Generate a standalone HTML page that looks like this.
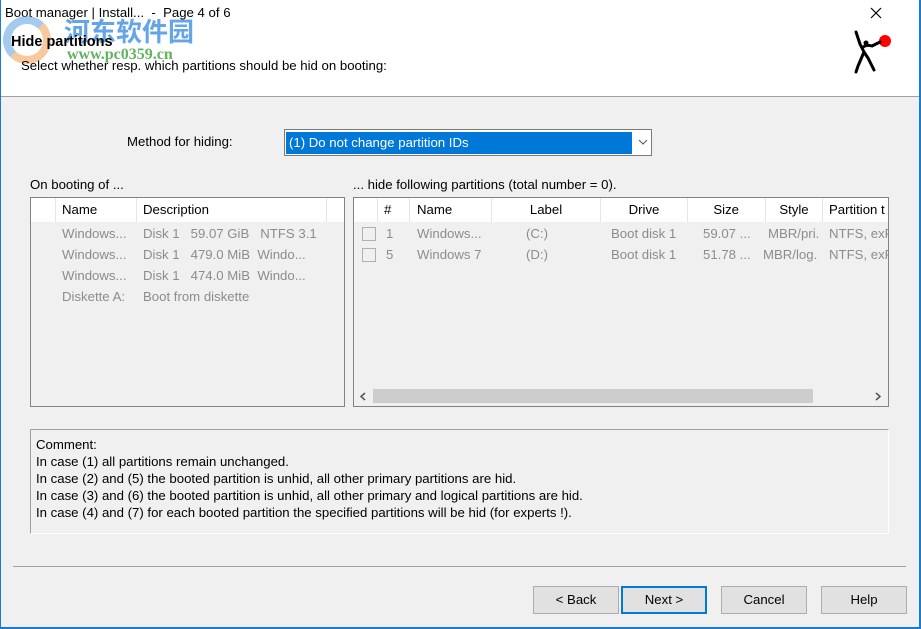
<!DOCTYPE html>
<html><head><meta charset="utf-8"><style>
*{box-sizing:border-box;margin:0;padding:0}
body{width:921px;height:629px;overflow:hidden;background:#f0f0f0;font-family:"Liberation Sans","Noto Sans CJK SC",sans-serif;font-size:13.2px;color:#000;position:relative}
.a{position:absolute;white-space:nowrap}
.g{color:#8c8c8c}
.hd{position:absolute;top:0;height:24px;line-height:24px;background:#fff;border-right:1px solid #e5e5e5;padding-left:6px}
.btn{position:absolute;top:586px;width:86px;height:28px;border:1px solid #adadad;background:#e1e1e1;text-align:center;line-height:26px}
</style></head><body>
<div class="a" style="left:0;top:0;width:921px;height:97px;background:#fff;border-bottom:1px solid #a0a0a0"></div>
<div class="a" style="left:0;top:0;width:1px;height:629px;background:#1a7ad4"></div>
<div class="a" style="left:919px;top:0;width:2px;height:629px;background:#1a7ad4"></div>
<div class="a" style="left:0;top:627px;width:921px;height:2px;background:#1a7ad4"></div>
<div class="a" style="left:5px;top:5px">Boot manager | Install...&nbsp; -&nbsp; Page 4 of 6</div>
<svg class="a" style="left:869px;top:6px" width="14" height="14"><path d="M2 2L12 12M12 2L2 12" stroke="#000" stroke-width="1.2"/></svg>
<div class="a" style="left:64px;top:12px;font-size:26px;font-weight:bold;color:#3d8fe0;opacity:.8">河东软件园</div>
<div class="a" style="left:67px;top:46px;font-size:16px;font-weight:bold;color:#3aa03a;opacity:.8;font-family:'Liberation Serif',serif">www.pc0359.cn</div>
<div class="a" style="left:3px;top:16px;width:48px;height:48px;border-radius:50%;border:8px solid #5a9fe0;border-right-color:#f0a050;border-bottom-color:#f0a050;opacity:.55"></div>
<div class="a" style="left:11px;top:34px;font-weight:bold;font-size:14.5px">Hide partitions</div>
<div class="a" style="left:21px;top:58px">Select whether resp. which partitions should be hid on booting:</div>
<svg class="a" style="left:852px;top:28px" width="42" height="48" viewBox="0 0 42 48"><circle cx="33" cy="13" r="6" fill="#f00"/><path d="M4 4 L8 16 L10 20 L12 24 L6 38 L4 44 M12 24 L16 30 L22 42 M10 20 Q14 16 20 18 L28 14" stroke="#000" stroke-width="3" fill="none" stroke-linecap="round"/><circle cx="14" cy="15" r="2.5" fill="#000"/></svg>
<div class="a" style="left:127px;top:134px">Method for hiding:</div>
<div class="a" style="left:284px;top:129px;width:368px;height:27px;background:#fff;border:1px solid #7a7a7a"></div>
<div class="a" style="left:286px;top:132px;width:346px;height:22px;background:#0078d7;color:#fff;line-height:22px;padding-left:3px">(1) Do not change partition IDs</div>
<svg class="a" style="left:638px;top:139px" width="10" height="6"><path d="M1 1L5 5L9 1" stroke="#555" fill="none"/></svg>
<div class="a" style="left:30px;top:177px">On booting of ...</div>
<div class="a" style="left:353px;top:177px">... hide following partitions (total number = 0).</div>
<div class="a" style="left:30px;top:197px;width:315px;height:210px;border:1px solid #828282;overflow:hidden">
 <div class="hd" style="left:0;width:25px;padding:0"></div>
 <div class="hd" style="left:25px;width:81px">Name</div>
 <div class="hd" style="left:106px;width:190px">Description</div>
 <div class="hd" style="left:296px;width:20px;border:0"></div>
 <div class="a g" style="left:31px;top:28px">Windows...</div><div class="a g" style="left:112px;top:28px">Disk 1 &nbsp;&nbsp;59.07 GiB &nbsp;&nbsp;NTFS 3.1</div>
 <div class="a g" style="left:31px;top:49px">Windows...</div><div class="a g" style="left:112px;top:49px">Disk 1 &nbsp;&nbsp;479.0 MiB &nbsp;Windo...</div>
 <div class="a g" style="left:31px;top:70px">Windows...</div><div class="a g" style="left:112px;top:70px">Disk 1 &nbsp;&nbsp;474.0 MiB &nbsp;Windo...</div>
 <div class="a g" style="left:31px;top:91px">Diskette A:</div><div class="a g" style="left:112px;top:91px">Boot from diskette</div>
</div>
<div class="a" style="left:353px;top:197px;width:536px;height:210px;border:1px solid #828282;overflow:hidden">
 <div class="hd" style="left:0;width:24px;padding:0"></div>
 <div class="hd" style="left:24px;width:32px">#</div>
 <div class="hd" style="left:56px;width:82px;padding-left:7px">Name</div>
 <div class="hd" style="left:138px;width:109px;text-align:center;padding:0">Label</div>
 <div class="hd" style="left:247px;width:87px;text-align:center;padding:0">Drive</div>
 <div class="hd" style="left:334px;width:78px;text-align:right;padding-right:26px">Size</div>
 <div class="hd" style="left:412px;width:57px;text-align:center;padding:0">Style</div>
 <div class="hd" style="left:469px;width:80px;padding-left:6px">Partition t</div>
 <div class="a" style="left:8px;top:29px;width:14px;height:14px;border:1px solid #b0b0b0"></div>
 <div class="a" style="left:8px;top:50px;width:14px;height:14px;border:1px solid #b0b0b0"></div>
 <div class="a g" style="left:32px;top:28px">1</div><div class="a g" style="left:63px;top:28px">Windows...</div><div class="a g" style="left:172px;top:28px">(C:)</div><div class="a g" style="left:257px;top:28px">Boot disk 1</div><div class="a g" style="left:349px;top:28px">59.07 ...</div><div class="a g" style="left:414px;top:28px">MBR/pri.</div><div class="a g" style="left:475px;top:28px">NTFS, exF.</div>
 <div class="a g" style="left:32px;top:49px">5</div><div class="a g" style="left:63px;top:49px">Windows 7</div><div class="a g" style="left:172px;top:49px">(D:)</div><div class="a g" style="left:257px;top:49px">Boot disk 1</div><div class="a g" style="left:349px;top:49px">51.78 ...</div><div class="a g" style="left:409px;top:49px">MBR/log.</div><div class="a g" style="left:475px;top:49px">NTFS, exF.</div>
 <div class="a" style="left:1px;top:189px;width:532px;height:18px;background:#f0f0f0"></div>
 <div class="a" style="left:19px;top:191px;width:440px;height:14px;background:#cdcdcd"></div>
 <svg class="a" style="left:6px;top:194px" width="6" height="9"><path d="M5 1L1 4.5L5 8" stroke="#555" stroke-width="1.5" fill="none"/></svg>
 <svg class="a" style="left:521px;top:194px" width="6" height="9"><path d="M1 1L5 4.5L1 8" stroke="#555" stroke-width="1.5" fill="none"/></svg>
</div>
<div class="a" style="left:30px;top:429px;width:859px;height:105px;border-top:1px solid #a0a0a0;border-left:1px solid #a0a0a0;border-right:1px solid #fff;border-bottom:1px solid #fff"></div>
<div class="a" style="left:36px;top:436px;line-height:17px">Comment:<br>In case (1) all partitions remain unchanged.<br>In case (2) and (5) the booted partition is unhid, all other primary partitions are hid.<br>In case (3) and (6) the booted partition is unhid, all other primary and logical partitions are hid.<br>In case (4) and (7) for each booted partition the specified partitions will be hid (for experts !).</div>
<div class="a" style="left:13px;top:566px;width:893px;height:1px;background:#a0a0a0"></div>
<div class="btn" style="left:533px">&lt; Back</div>
<div class="btn" style="left:621px;border:2px solid #0078d7;line-height:24px">Next &gt;</div>
<div class="btn" style="left:721px">Cancel</div>
<div class="btn" style="left:821px">Help</div>
</body></html>
